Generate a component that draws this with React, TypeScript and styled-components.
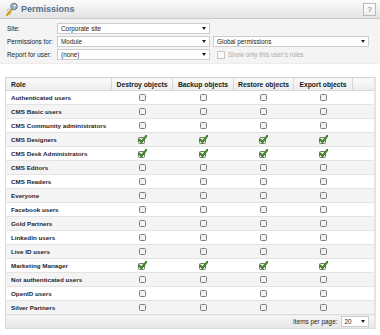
import React from 'react';
import styled, {createGlobalStyle} from 'styled-components';

const GlobalStyle = createGlobalStyle`
  html, body {
    margin: 0;
    padding: 0;
    background: #fff;
  }
  body {
    font-family: "Liberation Sans", Arial, sans-serif;
    width: 380px;
    height: 335px;
    overflow: hidden;
  }
`;

const TitleBar = styled.div`
  height: 18px;
  display: flex;
  align-items: center;
  padding: 0 4px 0 5px;
  background: linear-gradient(#fbfbfb, #e3e3e3);
  border-bottom: 1px solid #c9c9c9;
`;
const Title = styled.div`
  margin-left: 3px;
  font-size: 9px;
  font-weight: bold;
  color: #4f6f8f;
  flex: 1;
`;
const HelpButton = styled.div`
  width: 11px;
  height: 11px;
  border: 1px solid #b9b9b9;
  background: linear-gradient(#ffffff, #ececec);
  color: #777;
  font-size: 8px;
  line-height: 11px;
  text-align: center;
`;

const Filters = styled.div`
  background: #f4f4f4;
  padding: 4px 0 3px 7px;
  display: flex;
  flex-direction: column;
  gap: 2px;
  border-bottom: 1px solid #ececec;
`;
const FilterRow = styled.div`
  display: flex;
  align-items: center;
  height: 11px;
`;
const Label = styled.div`
  width: 50px;
  font-size: 6.4px;
  color: #222;
  white-space: nowrap;
`;
const Select = styled.div<{ $width: number }>`
  box-sizing: border-box;
  width: ${p => p.$width}px;
  height: 11px;
  margin-right: 3px;
  background: #fff;
  border: 1px solid #cdcdcd;
  font-size: 6.4px;
  color: #222;
  line-height: 9px;
  padding-left: 3px;
  display: flex;
  align-items: center;
  justify-content: space-between;
  &::after {
    content: '';
    margin-right: 3px;
    border-left: 2.5px solid transparent;
    border-right: 2.5px solid transparent;
    border-top: 3px solid #222;
  }
`;
const CheckLabel = styled.div`
  display: flex;
  align-items: center;
  margin-left: 4px;
  font-size: 6.4px;
  color: #aaa;
  gap: 3px;
  &::before {
    content: '';
    width: 6px;
    height: 6px;
    border: 1px solid #c6c6c6;
    background: #fafafa;
  }
`;

const Content = styled.div`
  padding: 13px 0 0 5px;
`;
const Grid = styled.table`
  width: 369px;
  border-collapse: collapse;
  table-layout: fixed;
  border: 1px solid #dcdcdc;
  border-right: 2px solid #e4e4e4;
`;
const HeadCell = styled.th<{ $left?: boolean }>`
  height: 12px;
  padding: 0 0 0 ${p => (p.$left ? 5 : 0)}px;
  background: linear-gradient(#fafafa, #ececec);
  border: 1px solid #d6d6d6;
  font-size: 6.8px;
  font-weight: bold;
  color: #151b24;
  text-align: ${p => (p.$left ? 'left' : 'center')};
  white-space: nowrap;
`;
const Row = styled.tr<{ $odd: boolean }>`
  background: ${p => (p.$odd ? '#f4f4f4' : '#fff')};
  border-bottom: 1px solid #e3e3e3;
`;
const RoleCell = styled.td`
  height: 13px;
  padding: 0 0 0 5px;
  font-size: 6.25px;
  font-weight: bold;
  color: #1e2530;
  white-space: nowrap;
`;
const MarkCell = styled.td`
  padding: 0;
  text-align: center;
  line-height: 0;
`;
const Footer = styled.td`
  height: 13px;
  padding: 0 2px 0 0;
  background: linear-gradient(#f6f6f6, #e6e6e6);
  border-top: 1px solid #dcdcdc;
`;
const Pager = styled.div`
  display: flex;
  justify-content: flex-end;
  align-items: center;
  gap: 3px;
  font-size: 6.4px;
  color: #222;
`;

const KeyIcon = () => (
  <svg width="13" height="14" viewBox="0 0 13 14">
    <path d="M2 13 L7 7" stroke="#c9a227" strokeWidth="2" strokeLinecap="round"/>
    <path d="M3 11 L5 12.5 M4.2 9.6 L6 11" stroke="#c9a227" strokeWidth="1.3"/>
    <circle cx="9" cy="4.5" r="3.3" fill="#9fb0c2" stroke="#6b7f93" strokeWidth="1"/>
    <circle cx="9.8" cy="3.7" r="1" fill="#f4f4f4"/>
    <path d="M1.5 9 L4 6.5" stroke="#9aa9b8" strokeWidth="1"/>
  </svg>
);

const Unchecked = () => (
  <svg width="7" height="7" viewBox="0 0 7 7">
    <rect x="0.5" y="0.5" width="6" height="6" rx="1" fill="#f2f2f2" stroke="#7d7d7d"/>
  </svg>
);

const Checked = () => (
  <svg width="9" height="9" viewBox="0 0 9 9">
    <rect x="0.5" y="2.5" width="6" height="6" rx="1" fill="#eef3ea" stroke="#6f7f68"/>
    <path d="M1.4 4.6 L3.4 7 L8.3 0.9" fill="none" stroke="#2d6a1c" strokeWidth="2" strokeLinecap="round" strokeLinejoin="round"/>
    <path d="M1.6 4.8 L3.4 6.6 L8 1.2" fill="none" stroke="#5fb33a" strokeWidth="0.9" strokeLinecap="round"/>
  </svg>
);

const columns = ['Destroy objects', 'Backup objects', 'Restore objects', 'Export objects'];
const widths = [106, 61, 61, 60, 59, 22];

const roles: [string, boolean][] = [
  ['Authenticated users', false],
  ['CMS Basic users', false],
  ['CMS Community administrators', false],
  ['CMS Designers', true],
  ['CMS Desk Administrators', true],
  ['CMS Editors', false],
  ['CMS Readers', false],
  ['Everyone', false],
  ['Facebook users', false],
  ['Gold Partners', false],
  ['LinkedIn users', false],
  ['Live ID users', false],
  ['Marketing Manager', true],
  ['Not authenticated users', false],
  ['OpenID users', false],
  ['Silver Partners', false],
];

function App() {
  return (
    <>
      <GlobalStyle/>
      <TitleBar>
        <KeyIcon/>
        <Title>Permissions</Title>
        <HelpButton>?</HelpButton>
      </TitleBar>
      <Filters>
        <FilterRow>
          <Label>Site:</Label>
          <Select $width={153}>Corporate site</Select>
        </FilterRow>
        <FilterRow>
          <Label>Permissions for:</Label>
          <Select $width={153}>Module</Select>
          <Select $width={156}>Global permissions</Select>
        </FilterRow>
        <FilterRow>
          <Label>Report for user:</Label>
          <Select $width={153}>(none)</Select>
          <CheckLabel>Show only this user's roles</CheckLabel>
        </FilterRow>
      </Filters>
      <Content>
        <Grid>
          <colgroup>
            {widths.map((w, i) => <col key={i} style={{width: w}}/>)}
          </colgroup>
          <thead>
            <tr>
              <HeadCell $left>Role</HeadCell>
              {columns.map(c => <HeadCell key={c}>{c}</HeadCell>)}
              <HeadCell/>
            </tr>
          </thead>
          <tbody>
            {roles.map(([name, allowed], i) => (
              <Row key={name} $odd={i % 2 === 1}>
                <RoleCell>{name}</RoleCell>
                {columns.map(c => (
                  <MarkCell key={c}>{allowed ? <Checked/> : <Unchecked/>}</MarkCell>
                ))}
                <MarkCell/>
              </Row>
            ))}
            <tr>
              <Footer colSpan={6}>
                <Pager>
                  Items per page:
                  <Select $width={28}>20</Select>
                </Pager>
              </Footer>
            </tr>
          </tbody>
        </Grid>
      </Content>
    </>
  );
}

export default App;
